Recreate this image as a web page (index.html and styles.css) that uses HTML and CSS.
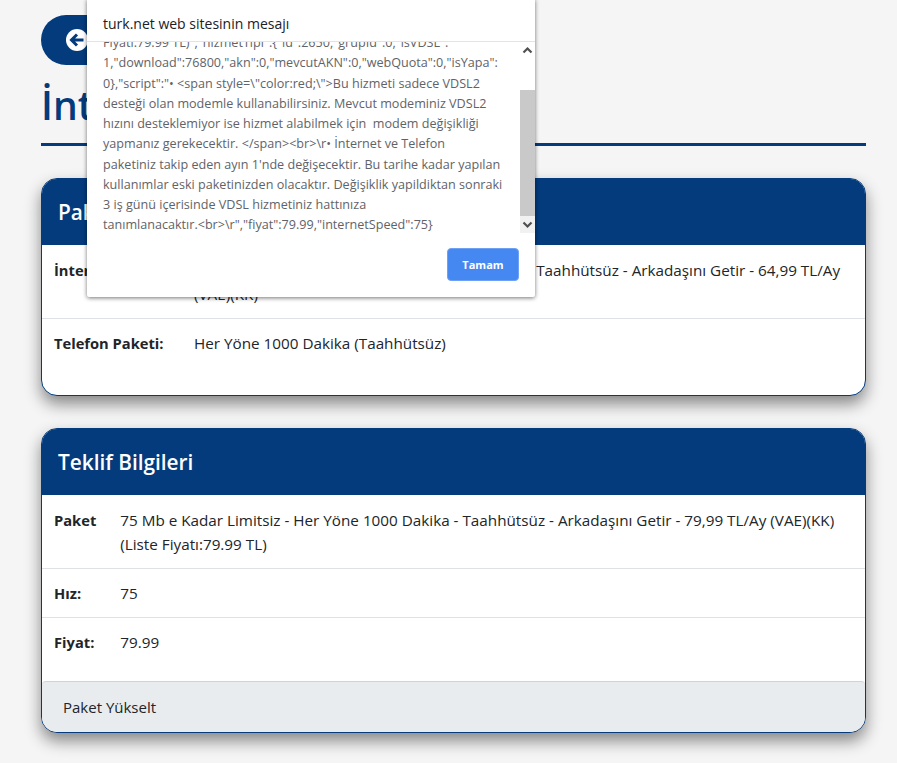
FILE: index.html
```html
<!DOCTYPE html>
<html lang="tr">
<head>
<meta charset="utf-8">
<title>turk.net</title>
<link rel="stylesheet" href="styles.css">
</head>
<body>
<main class="page">
  <a class="back" href="#">
    <svg class="back-icon" viewBox="0 0 24 24" width="24" height="24"><circle cx="12" cy="12" r="11" fill="#fff"/><path d="M18.5 12H7M12 6.5 6.5 12l5.5 5.5" fill="none" stroke="#033b7c" stroke-width="3"/></svg>
    <span>Geri Dön</span>
  </a>
  <h1 class="title">İnternet Paket Değişikliği</h1>
  <section class="card card-current">
    <h2 class="card-head">Paket Bilgileri</h2>
    <table class="info info-wide">
      <tr><th>İnternet Paketi:</th><td>16 Mb e Kadar Limitsiz - Her Yöne 1000 Dakika - Taahhütsüz - Arkadaşını Getir - 64,99 TL/Ay (VAE)(KK)</td></tr>
      <tr><th>Telefon Paketi:</th><td>Her Yöne 1000 Dakika (Taahhütsüz)</td></tr>
    </table>
  </section>
  <section class="card">
    <h2 class="card-head">Teklif Bilgileri</h2>
    <table class="info info-narrow">
      <tr><th>Paket</th><td>75 Mb e Kadar Limitsiz - Her Yöne 1000 Dakika - Taahhütsüz - Arkadaşını Getir - 79,99 TL/Ay (VAE)(KK) (Liste Fiyatı:79.99 TL)</td></tr>
      <tr><th>Hız:</th><td>75</td></tr>
      <tr><th>Fiyat:</th><td>79.99</td></tr>
    </table>
    <div class="card-foot">Paket Yükselt</div>
  </section>
</main>
<div class="dialog">
  <div class="dialog-title">turk.net web sitesinin mesajı</div>
  <div class="dialog-scroll">
    <div class="dialog-text">Fiyatı:79.99 TL)","hizmetTipi":{"id":2650,"grupId":0,"isVDSL":<br>1,"download":76800,"akn":0,"mevcutAKN":0,"webQuota":0,"isYapa":<br>0},"script":"• &lt;span style=\"color:red;\"&gt;Bu hizmeti sadece VDSL2<br>desteği olan modemle kullanabilirsiniz. Mevcut modeminiz VDSL2<br>hızını desteklemiyor ise hizmet alabilmek için &nbsp;modem değişikliği<br>yapmanız gerekecektir. &lt;/span&gt;&lt;br&gt;\r• İnternet ve Telefon<br>paketiniz takip eden ayın 1'nde değişecektir. Bu tarihe kadar yapılan<br>kullanımlar eski paketinizden olacaktır. Değişiklik yapildiktan sonraki<br>3 iş günü içerisinde VDSL hizmetiniz hattınıza<br>tanımlanacaktır.&lt;br&gt;\r","fiyat":79.99,"internetSpeed":75}</div>
    <div class="scrollbar">
      <svg class="arrow" viewBox="0 0 15 17" width="15" height="17"><path d="M3.5 10.5 7.5 6.5l4 4" fill="none" stroke="#505050" stroke-width="2.2"/></svg>
      <div class="track"><div class="thumb"></div></div>
      <svg class="arrow" viewBox="0 0 15 17" width="15" height="17"><path d="M3.5 6.5l4 4 4-4" fill="none" stroke="#505050" stroke-width="2.2"/></svg>
    </div>
  </div>
  <div class="dialog-actions"><button class="ok">Tamam</button></div>
</div>
</body>
</html>
```
FILE: styles.css
```css
* { box-sizing: border-box; }
html, body { margin: 0; height: 763px; overflow: hidden; }
body {
  background: #f5f5f5;
  color: #212529;
  font-family: "Open Sans", "Liberation Sans", sans-serif;
  font-size: 15.25px;
  line-height: 24px;
}
.page { padding: 15px 31px 0 41px; }
.back {
  display: flex;
  align-items: center;
  gap: 10px;
  width: 160px;
  height: 50px;
  padding-left: 24px;
  border-radius: 25px;
  background: #033b7c;
  color: #fff;
  text-decoration: none;
  font-weight: 700;
}
.back-icon { flex: none; }
.title {
  margin: 14px 0 32px;
  padding-bottom: 12px;
  height: 67px;
  border-bottom: 3px solid #033b7c;
  color: #033b7c;
  font-size: 39px;
  font-weight: 600;
  line-height: 52px;
}
.card {
  margin-bottom: 32px;
  border: 1px solid #033b7c;
  border-radius: 16px;
  background: #fff;
  box-shadow: 0 8px 16px rgba(0, 0, 0, .45);
  overflow: hidden;
}
.card-current { height: 218px; }
.card-head {
  margin: 0;
  padding: 0 16px;
  height: 66px;
  background: #033b7c;
  color: #fff;
  font-size: 20.8px;
  font-weight: 600;
  line-height: 67px;
}
.info { width: 100%; border-collapse: collapse; }
.info th, .info td { padding: 12px; vertical-align: top; text-align: left; }
.info tr:first-child th, .info tr:first-child td { padding-top: 13px; }
.info th { font-weight: 700; font-size: 14.7px; white-space: nowrap; }
.info tr + tr th, .info tr + tr td { border-top: 1px solid #dee2e6; }
.info-wide th { width: 140px; }
.info-narrow th { width: 66px; }
.card-foot {
  margin-top: 15px;
  height: 51px;
  padding: 0 21px;
  border-top: 1px solid #d3d3d3;
  border-radius: 4px 4px 0 0;
  background: #e9ecef;
  line-height: 51px;
  font-size: 15px;
}
.dialog {
  position: absolute;
  left: 87px;
  top: -1px;
  width: 448px;
  height: 298px;
  background: #fff;
  border-radius: 0 0 2px 2px;
  box-shadow: 0 1px 4px rgba(0, 0, 0, .55);
}
.dialog-title {
  height: 43px;
  padding: 13px 16px 0;
  border-bottom: 1px solid #e3e3e3;
  color: #202124;
  font-size: 14px;
  line-height: 24px;
}
.dialog-scroll {
  display: flex;
  justify-content: space-between;
  height: 191px;
  padding-left: 16px;
  overflow: hidden;
}
.dialog-text {
  margin-top: -9px;
  color: #5f6368;
  font-size: 12.6px;
  line-height: 20.25px;
  white-space: nowrap;
}
.scrollbar {
  display: flex;
  flex-direction: column;
  flex: none;
  width: 15px;
  background: linear-gradient(#fff 0 48px, #f1f1f1 48px);
}
.arrow { flex: none; }
.track { flex: 1; padding-top: 31px; }
.thumb { height: 126px; background: #c9c9c9; }
.dialog-actions { display: flex; justify-content: flex-end; padding: 15px 16px 0; }
.ok {
  width: 72px;
  height: 33px;
  border: 1px solid #6ea1f6;
  border-radius: 4px;
  background: #4688f1;
  color: #fff;
  font: 700 11px/1 "Open Sans", "Liberation Sans", sans-serif;
}
```
